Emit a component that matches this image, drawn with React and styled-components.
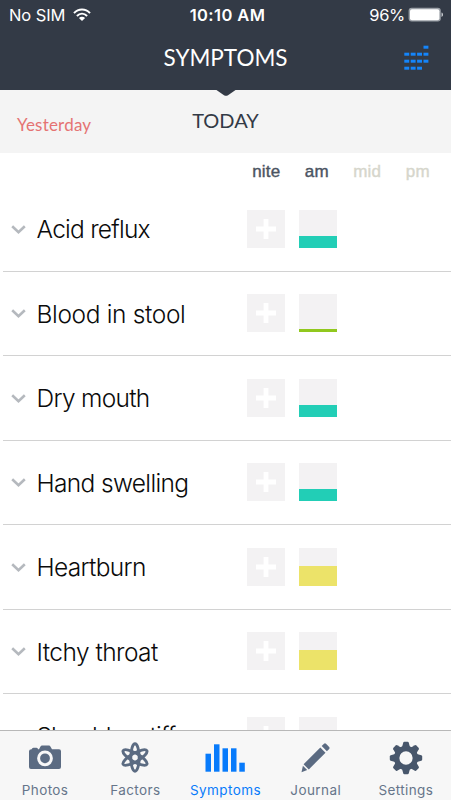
import React from "react";
import styled, { createGlobalStyle } from "styled-components";

const GlobalStyle = createGlobalStyle`
  * {
    box-sizing: border-box;
  }

  body {
    margin: 0;
    background: #fff;
    overflow: hidden;
  }
`;

const symptoms = [
  { name: "Acid reflux", level: 12, color: "#22ceb6", spacing: -0.75 },
  { name: "Blood in stool", level: 3.5, color: "#91c81e", spacing: -0.35 },
  { name: "Dry mouth", level: 12, color: "#22ceb6", spacing: -0.7 },
  { name: "Hand swelling", level: 12, color: "#22ceb6", spacing: -0.65 },
  { name: "Heartburn", level: 20, color: "#ece369", spacing: -0.66 },
  { name: "Itchy throat", level: 20, color: "#ece369", spacing: -0.55 },
  { name: "Shoulder stiffness", level: 12, color: "#22ceb6", spacing: -0.87 },
];

const periods = [
  { name: "nite", active: true },
  { name: "am", active: true },
  { name: "mid", active: false },
  { name: "pm", active: false },
];

const WifiIcon = () => (
  <svg width="18" height="14" viewBox="0 0 18 14" fill="none" stroke="#fff" strokeWidth="2">
    <path d="M1 5.1C5.5.4 12.500.4 17 5.100" />
    <path d="M3.900 8C6.900 5 11.100 5 14.100 8" />
    <path d="M9 13 5.900 9.900C7.600 8.200 10.400 8.200 12.100 9.900Z" fill="#fff" stroke="none" />
  </svg>
);

const BatteryIcon = () => (
  <svg width="36" height="16" viewBox="0 0 36 16">
    <rect x="0.600" y="0.800" width="32.200" height="13.800" rx="3" fill="#9a9fa6" />
    <rect x="2" y="2.200" width="29.400" height="11" rx="2" fill="#fff" />
    <path d="M33.500 5.500C35.500 6 35.500 9.400 33.500 9.900Z" fill="#c8cbd0" />
  </svg>
);

const GridIcon = () => (
  <svg width="25" height="25" viewBox="0 0 25 25" fill="#1485fb">
    {[[3], [0, 1, 2, 3], [0, 1, 2, 3], [0, 1, 2]].map((cols, row) =>
      cols.map((col) => (
        <rect key={`${row}-${col}`} x={0.3 + col * 6.4} y={0.7 + row * 7} width="4.900" height="3" />
      ))
    )}
  </svg>
);

const NotchIcon = () => (
  <svg width="22" height="8" viewBox="0 0 22 8">
    <path d="M0 0H22L13 6.200Q11 7.500 9 6.200Z" fill="#333a46" />
  </svg>
);

const ChevronIcon = () => (
  <svg width="15" height="12" viewBox="0 0 15 12" fill="none" stroke="#b5b9be" strokeWidth="2.600">
    <path d="M1.200 3.200 7.500 9.200 13.800 3.200" />
  </svg>
);

const PlusIcon = () => (
  <svg width="20" height="20" viewBox="0 0 20 20" fill="#fff">
    <path d="M7.600 0H12.400V7.600H20V12.400H12.400V20H7.600V12.400H0V7.600H7.600Z" />
  </svg>
);

const CameraIcon = () => (
  <svg width="34" height="34" viewBox="0 0 34 34">
    <path
      d="M3.600 8.200Q4 6.700 5.500 6.700H8.500Q10 6.700 10 8.200H11L12.500 5.400Q13.100 4.600 14 4.600H21Q21.900 4.600 22.400 5.400L24 8.200H31Q33 8.200 33 10.200V26Q33 28 31 28H3Q1 28 1 26V10.200Q1 8.200 3.600 8.200Z"
      fill="#5b6b82"
    />
    <circle cx="17" cy="17.300" r="6.400" fill="none" stroke="#f7f7f7" strokeWidth="3" />
  </svg>
);

const AtomIcon = () => (
  <svg width="34" height="34" viewBox="0 0 34 34" fill="none" stroke="#5b6b82" strokeWidth="2.900">
    {[0, 60, 120].map((angle) => (
      <ellipse key={angle} cx="17" cy="16.500" rx="4.200" ry="13.700" transform={`rotate(${angle} 17 16.500)`} />
    ))}
  </svg>
);

const BarsIcon = () => (
  <svg width="40" height="34" viewBox="0 0 40 34" fill="#087bfb">
    <rect x="0.500" y="12.700" width="5.500" height="18" />
    <rect x="9" y="3.300" width="5.500" height="27.400" />
    <rect x="17.500" y="7.300" width="5.500" height="23.400" />
    <rect x="26" y="7.300" width="5.500" height="23.400" />
    <rect x="34.300" y="21.700" width="5.500" height="9" />
  </svg>
);

const PencilIcon = () => (
  <svg width="34" height="34" viewBox="0 0 34 34" fill="#5b6b82">
    <path d="M21.300 6.500 26.500 11.700 9.800 28.400 4.600 23.200Z" />
    <path d="M22.700 5.100 25 2.800Q26 1.900 27 2.800L30.200 6Q31.100 7 30.200 8L27.900 10.300Z" />
    <path d="M3.900 24.800 8.200 29.100 2.500 31.300Z" />
  </svg>
);

const GearIcon = () => (
  <svg width="34" height="34" viewBox="0 0 34 34">
    <g fill="#47566b">
      {[0, 45, 90, 135, 180, 225, 270, 315].map((angle) => (
        <path
          key={angle}
          d="M12.800 7 14.200 1.700Q14.500.8 15.400.8H18.600Q19.500.8 19.800 1.700L21.200 7Z"
          transform={`rotate(${angle} 17 17)`}
        />
      ))}
    </g>
    <circle cx="17" cy="17" r="9.400" fill="none" stroke="#47566b" strokeWidth="5.500" />
  </svg>
);

const tabs = [
  { name: "Photos", icon: <CameraIcon /> },
  { name: "Factors", icon: <AtomIcon /> },
  { name: "Symptoms", icon: <BarsIcon />, active: true },
  { name: "Journal", icon: <PencilIcon /> },
  { name: "Settings", icon: <GearIcon /> },
];

const App = () => {
  return (
    <Screen>
      <GlobalStyle />
      <Header>
        <StatusBar>
          <Carrier>
            No SIM <WifiIcon />
          </Carrier>
          <Clock>10:10 AM</Clock>
          <Battery>
            96% <BatteryIcon />
          </Battery>
        </StatusBar>
        <NavBar>
          <ScreenTitle>SYMPTOMS</ScreenTitle>
          <GridButton aria-label="Calendar">
            <GridIcon />
          </GridButton>
        </NavBar>
        <Notch>
          <NotchIcon />
        </Notch>
      </Header>
      <DayBar>
        <Yesterday>Yesterday</Yesterday>
        <Today>TODAY</Today>
      </DayBar>
      <Content>
        <PeriodRow>
          {periods.map((period) => (
            <Period key={period.name} $active={period.active}>
              {period.name}
            </Period>
          ))}
        </PeriodRow>
        {symptoms.map((symptom) => (
          <SymptomRow key={symptom.name}>
            <ChevronIcon />
            <SymptomName $spacing={symptom.spacing}>{symptom.name}</SymptomName>
            <AddTile aria-label="Add">
              <PlusIcon />
            </AddTile>
            <LevelTile>
              <Level $height={symptom.level} $color={symptom.color} />
            </LevelTile>
          </SymptomRow>
        ))}
      </Content>
      <TabBar>
        {tabs.map((tab) => (
          <Tab key={tab.name} $active={tab.active}>
            {tab.icon}
            <TabLabel>{tab.name}</TabLabel>
          </Tab>
        ))}
      </TabBar>
    </Screen>
  );
};

const Screen = styled.div`
  display: flex;
  flex-direction: column;
  width: 451px;
  height: 800px;
  overflow: hidden;
  background: #fff;
  font-family: Inter, "Liberation Sans", sans-serif;
`;

const Header = styled.header`
  position: relative;
  flex: none;
  height: 90px;
  background: #333a46;
  color: #fff;
`;

const StatusBar = styled.div`
  display: grid;
  grid-template-columns: 1fr auto 1fr;
  align-items: center;
  height: 29px;
  padding: 0 7px 0 9px;
  font-size: 16.5px;
`;

const Carrier = styled.div`
  display: flex;
  align-items: center;
  gap: 8px;
  letter-spacing: -0.1px;
`;

const Clock = styled.div`
  padding-left: 2px;
  font-weight: 600;
  letter-spacing: 0.4px;
`;

const Battery = styled.div`
  display: flex;
  align-items: center;
  justify-content: flex-end;
  gap: 3px;
  letter-spacing: -0.3px;
`;

const NavBar = styled.div`
  display: grid;
  grid-template-columns: 1fr auto 1fr;
  align-items: center;
  height: 57px;
  padding: 0 22px;
`;

const ScreenTitle = styled.h1`
  grid-column: 2;
  margin: -1px 0 0;
  font-family: Lato, sans-serif;
  font-size: 22.5px;
  font-weight: 400;
`;

const GridButton = styled.button`
  display: flex;
  justify-self: end;
  padding: 0;
  border: 0;
  background: none;
`;

const Notch = styled.div`
  position: absolute;
  top: 89px;
  left: 214.5px;
  z-index: 1;
  line-height: 0;
`;

const DayBar = styled.div`
  display: grid;
  grid-template-columns: 1fr auto 1fr;
  flex: none;
  align-items: center;
  height: 63px;
  padding: 0 17px;
  background: #f4f4f4;
  font-family: Lato, sans-serif;
`;

const Yesterday = styled.div`
  padding-top: 6px;
  color: #e57373;
  font-size: 17px;
  letter-spacing: 0.2px;
`;

const Today = styled.div`
  padding-bottom: 3px;
  color: #333a46;
  font-size: 20px;
`;

const Content = styled.main`
  flex: 1;
  min-height: 0;
  overflow: hidden;
`;

const PeriodRow = styled.div`
  display: grid;
  grid-template-columns: repeat(4, 50.5px);
  height: 34.2px;
  padding-left: 241px;
  line-height: 37px;
  text-align: center;
`;

const Period = styled.div`
  color: ${(props) => (props.$active ? "#4b5462" : "#d6d6cc")};
  font-family: "Liberation Sans", sans-serif;
  font-size: 17px;
  letter-spacing: 0.2px;
  -webkit-text-stroke: 0.4px;
`;

const SymptomRow = styled.div`
  display: grid;
  grid-template-columns: 15px 203px 38px 38px;
  align-items: center;
  height: 84.5px;
  margin-left: 3px;
  padding-left: 8px;
  border-bottom: 1px solid #d2d2d2;
`;

const SymptomName = styled.div`
  padding: 1px 0 0 10.5px;
  color: #0b0b0b;
  font-size: 24.5px;
  font-weight: 300;
  letter-spacing: ${(props) => props.$spacing}px;
  white-space: nowrap;
`;

const AddTile = styled.button`
  display: flex;
  align-items: center;
  justify-content: center;
  width: 38px;
  height: 38px;
  margin-left: 18px;
  padding: 0;
  border: 0;
  background: #f3f2f3;
`;

const LevelTile = styled.div`
  display: flex;
  align-items: flex-end;
  width: 38px;
  height: 38px;
  margin-left: 32.4px;
  background: #f3f2f3;
`;

const Level = styled.div`
  width: 100%;
  height: ${(props) => props.$height}px;
  background: ${(props) => props.$color};
`;

const TabBar = styled.nav`
  display: grid;
  grid-template-columns: repeat(5, 1fr);
  flex: none;
  height: 70px;
  border-top: 1px solid #b8b8b8;
  background: #f7f7f7;
`;

const Tab = styled.div`
  display: flex;
  flex-direction: column;
  align-items: center;
  padding-top: 10px;
  color: ${(props) => (props.$active ? "#087bfb" : "#66758a")};
`;

const TabLabel = styled.span`
  margin-top: 7px;
  font-size: 13.5px;
  line-height: 17px;
  letter-spacing: 0.4px;
`;

export default App;
